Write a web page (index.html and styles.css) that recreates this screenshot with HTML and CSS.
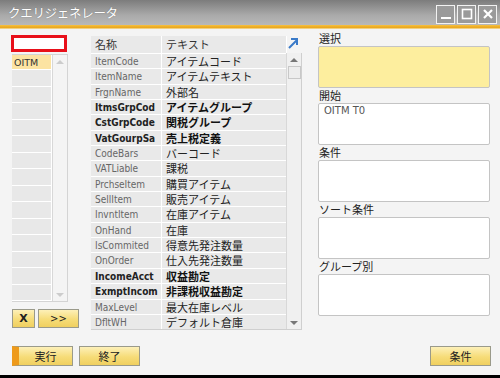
FILE: index.html
```html
<!DOCTYPE html>
<html lang="ja">
<head>
<meta charset="utf-8">
<link rel="stylesheet" href="styles.css">
</head>
<body>
<div class="window">
  <div class="titlebar">
    <span class="title">クエリジェネレータ</span>
    <div class="controls">
      <span class="ctl"><svg width="16" height="16" viewBox="0 0 16 16"><rect x="3" y="11" width="10" height="2" fill="#fff"/></svg></span>
      <span class="ctl"><svg width="16" height="16" viewBox="0 0 16 16"><rect x="3.5" y="3.5" width="9" height="9" fill="none" stroke="#fff" stroke-width="1.6"/></svg></span>
      <span class="ctl"><svg width="16" height="16" viewBox="0 0 16 16"><path d="M4 4L12 12M12 4L4 12" stroke="#fff" stroke-width="2.2"/></svg></span>
    </div>
  </div>
  <div class="stripe"></div>
  <div class="body">
    <div class="main">
      <div class="leftcol">
        <div class="redbox"></div>
        <div class="tablelist">
          <div class="cells">
            <div class="cell sel">OITM</div>
            <div class="cell"></div><div class="cell"></div><div class="cell"></div><div class="cell"></div>
            <div class="cell"></div><div class="cell"></div><div class="cell"></div><div class="cell"></div>
            <div class="cell"></div><div class="cell"></div><div class="cell"></div><div class="cell"></div>
            <div class="cell"></div><div class="cell"></div>
          </div>
          <div class="vscroll small">
            <span class="arrow up"></span>
            <span class="arrow down"></span>
          </div>
        </div>
        <div class="smallbtns">
          <button class="btn x">X</button>
          <button class="btn add">&gt;&gt;</button>
        </div>
      </div>
      <div class="fields">
        <div class="fhead">
          <div class="hc c1">名称</div>
          <div class="hc c2">テキスト</div>
          <svg class="expand" width="14" height="14" viewBox="0 0 14 14"><path d="M3 12L11 4M5 3H11V9" fill="none" stroke="#3a7ac8" stroke-width="2"/></svg>
        </div>
        <div class="fbody">
          <div class="rows">
            <div class="row"><span class="c1">ItemCode</span><span class="c2">アイテムコード</span></div>
            <div class="row"><span class="c1">ItemName</span><span class="c2">アイテムテキスト</span></div>
            <div class="row"><span class="c1">FrgnName</span><span class="c2">外部名</span></div>
            <div class="row b"><span class="c1">ItmsGrpCod</span><span class="c2">アイテムグループ</span></div>
            <div class="row b"><span class="c1">CstGrpCode</span><span class="c2">関税グループ</span></div>
            <div class="row b"><span class="c1">VatGourpSa</span><span class="c2">売上税定義</span></div>
            <div class="row"><span class="c1">CodeBars</span><span class="c2">バーコード</span></div>
            <div class="row"><span class="c1">VATLiable</span><span class="c2">課税</span></div>
            <div class="row"><span class="c1">PrchseItem</span><span class="c2">購買アイテム</span></div>
            <div class="row"><span class="c1">SellItem</span><span class="c2">販売アイテム</span></div>
            <div class="row"><span class="c1">InvntItem</span><span class="c2">在庫アイテム</span></div>
            <div class="row"><span class="c1">OnHand</span><span class="c2">在庫</span></div>
            <div class="row"><span class="c1">IsCommited</span><span class="c2">得意先発注数量</span></div>
            <div class="row"><span class="c1">OnOrder</span><span class="c2">仕入先発注数量</span></div>
            <div class="row b"><span class="c1">IncomeAcct</span><span class="c2">収益勘定</span></div>
            <div class="row b"><span class="c1">ExmptIncom</span><span class="c2">非課税収益勘定</span></div>
            <div class="row"><span class="c1">MaxLevel</span><span class="c2">最大在庫レベル</span></div>
            <div class="row"><span class="c1">DfltWH</span><span class="c2">デフォルト倉庫</span></div>
          </div>
          <div class="vscroll">
            <span class="arrow up"></span>
            <span class="thumb"></span>
            <span class="arrow down"></span>
          </div>
        </div>
      </div>
      <div class="rightcol">
        <div class="group"><div class="lbl">選択</div><div class="box yellow"></div></div>
        <div class="group"><div class="lbl">開始</div><div class="box">OITM T0</div></div>
        <div class="group"><div class="lbl">条件</div><div class="box"></div></div>
        <div class="group"><div class="lbl">ソート条件</div><div class="box"></div></div>
        <div class="group"><div class="lbl">グループ別</div><div class="box"></div></div>
      </div>
    </div>
    <div class="footer">
      <button class="btn wide primary">実行</button>
      <button class="btn wide">終了</button>
      <span class="spacer"></span>
      <button class="btn wide">条件</button>
    </div>
  </div>
</div>
</body>
</html>
```
FILE: styles.css
```css
* { box-sizing: border-box; }
html, body { margin: 0; padding: 0; }
body {
  width: 500px; height: 378px; overflow: hidden;
  font-family: "Noto Sans CJK JP", "DejaVu Sans", sans-serif;
  font-size: 11px; color: #333; background: #000;
}
.window { width: 500px; height: 375px; background: #f4f4f4; display: flex; flex-direction: column; }
.titlebar {
  height: 25px; display: flex; align-items: center; justify-content: space-between;
  background: linear-gradient(#7c7c7c, #a9a9a9 60%, #b8b8b8);
  padding: 0 3px 0 8px;
}
.title { color: #fff; font-size: 12.5px; letter-spacing: -0.3px; text-shadow: 0 0 1px #666; }
.controls { display: flex; gap: 2px; margin-top: 3px; }
.ctl {
  width: 19px; height: 19px; border: 1px solid #f2f2f2; background: #9a9a9a;
  display: flex; align-items: center; justify-content: center;
}
.stripe { height: 4px; background: linear-gradient(#f7c244, #e9a61b 60%, #f7e3b0); }
.body { flex: 1; display: flex; flex-direction: column; padding: 5px 9px 9px 12px; }
.main { display: flex; }
.leftcol { width: 67px; display: flex; flex-direction: column; }
.redbox { width: 56px; height: 17px; border: 3px solid #e8101a; background: #fff; margin-left: -1px; margin-top: 1px; }
.tablelist { display: flex; width: 56px; margin-top: 2px; border: 1px solid #d4d4d4; border-left: none; background: #fff; }
.cells { width: 41px; display: flex; flex-direction: column; }
.cell { height: 16.5px; background: #e8e8e8; border-bottom: 1px solid #fff; border-right: 1px solid #fff; padding-left: 2px; line-height: 15px; font-family: "DejaVu Sans", sans-serif; font-size: 9.5px; color: #333; }
.cell.sel { background: #fce3a2; height: 15px; }
.vscroll { width: 15px; background: #f0f0f0; display: flex; flex-direction: column; align-items: center; padding: 5px 0 4px; border-left: 1px solid #d8d8d8; }
.vscroll.small { background: #f4f4f4; }
.vscroll .down { margin-top: auto; }
.arrow { width: 0; height: 0; border-left: 4px solid transparent; border-right: 4px solid transparent; }
.arrow.up { border-bottom: 4px solid #777; }
.arrow.down { border-top: 4px solid #777; }
.vscroll.small .arrow.up { border-bottom-color: #ccc; }
.vscroll.small .arrow.down { border-top-color: #ccc; }
.thumb { width: 13px; height: 13px; margin-top: 4px; background: #ededed; border: 1px solid #c8c8c8; }
.smallbtns { display: flex; gap: 3px; margin-top: 7px; }
.btn {
  font-family: "Noto Sans CJK JP", "DejaVu Sans", sans-serif; font-size: 11px; color: #222;
  height: 19px; padding: 0; border: 1px solid #9a9a8a;
  background: linear-gradient(#fdf0b8, #f6dc78 55%, #f0d060);
  display: flex; align-items: center; justify-content: center; line-height: 1;
}
.btn.x { width: 23px; font-family: "DejaVu Sans", sans-serif; font-weight: bold; font-size: 11px; }
.btn.add { width: 41px; font-family: "DejaVu Sans", sans-serif; font-size: 10px; }
.fields { margin-left: 12px; width: 211px; display: flex; flex-direction: column; }
.fhead { display: flex; height: 19px; position: relative; padding-top: 2px; }
.hc { background: #e9e9e9; border-right: 1px solid #fff; line-height: 17px; padding-left: 4px; color: #333; }
.hc.c1 { width: 71px; }
.hc.c2 { width: 125px; }
.expand { position: absolute; right: 2px; top: 2px; }
.fbody { display: flex; border: 1px solid #cfcfcf; border-top: none; border-left: none; background: #fff; }
.rows { width: 196px; display: flex; flex-direction: column; }
.row { display: flex; height: 15.35px; line-height: 15px; border-top: 1px solid #fff; background: #e9e9e9; color: #666; white-space: nowrap; overflow: hidden; }
.row .c1 { width: 71px; padding-left: 4px; border-right: 1px solid #fff; font-family: "DejaVu Sans Condensed", "DejaVu Sans", sans-serif; font-size: 10px; }
.row .c2 { flex: 1; padding-left: 4px; color: #222; }
.row.b .c1 { font-weight: bold; color: #222; }
.row.b .c2 { font-weight: bold; color: #111; }
.fields .vscroll { width: 15px; border-left: 1px solid #d8d8d8; }
.rightcol { margin-left: 16px; margin-top: -3px; width: 172px; display: flex; flex-direction: column; }
.group { display: flex; flex-direction: column; height: 57px; }
.lbl { height: 15px; line-height: 15px; padding-left: 1px; color: #222; }
.box { height: 42px; border: 1px solid #c4c4c4; border-radius: 2px; background: #fff; padding: 1px 5px; font-family: "DejaVu Sans", sans-serif; font-size: 10px; color: #555; }
.box.yellow { background: #fdee9e; }
.footer { display: flex; margin-top: auto; gap: 6px; }
.spacer { flex: 1; }
.btn.wide { width: 61px; height: 20px; }
.btn.primary { border-left: 7px solid #ee9a1a; }
```
